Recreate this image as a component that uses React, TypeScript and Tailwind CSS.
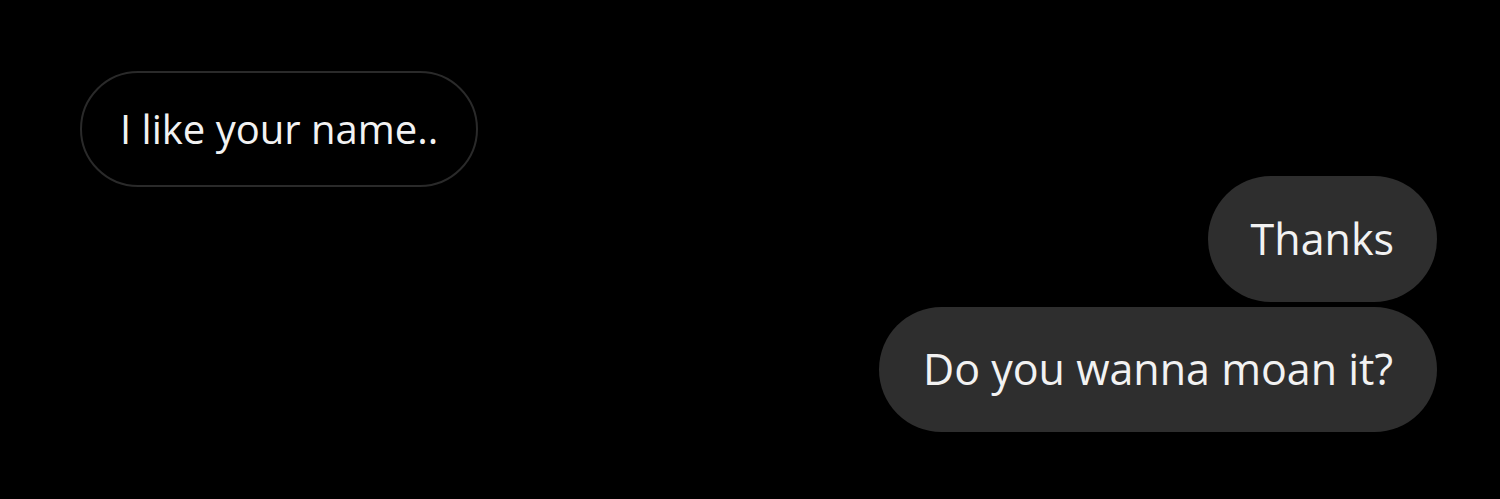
import React from 'react';

const font = { fontFamily: '"Open Sans", "Noto Sans", sans-serif' };

export default function App() {
  return (
    <div className="w-[1500px] h-[499px] bg-black overflow-hidden" style={font}>
      <div className="flex flex-col pt-[71px] pl-[80px] pr-[63px]">
        {/* incoming */}
        <div className="flex">
          <div className="h-[116px] px-[38px] flex items-center rounded-full border-2 border-[#2a2a2a] text-[#f2f2f2] text-[40px]">
            I like your name..
          </div>
        </div>

        {/* outgoing */}
        <div className="flex flex-col items-end gap-[5px] mt-[-11px]">
          <div className="h-[126px] px-[43px] flex items-center rounded-full bg-[#2e2e2e] text-[#f2f2f2] text-[43px]">
            Thanks
          </div>
          <div className="h-[125px] px-[44px] flex items-center rounded-full bg-[#2e2e2e] text-[#f2f2f2] text-[43px]">
            Do you wanna moan it?
          </div>
        </div>
      </div>
    </div>
  );
}
